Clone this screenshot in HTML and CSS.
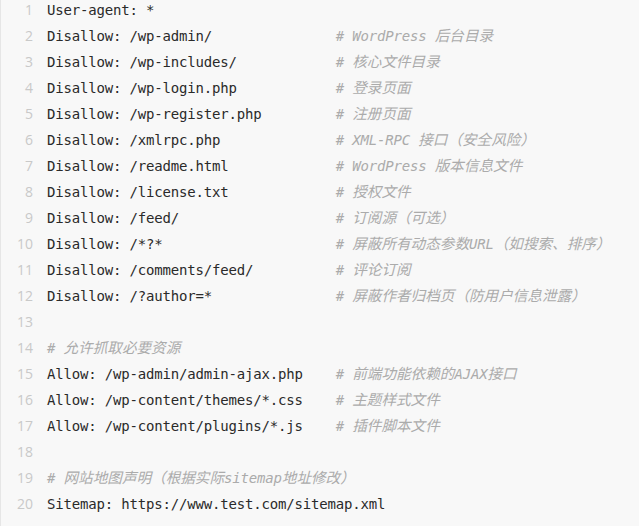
FILE: index.html
```html
<!DOCTYPE html>
<html lang="zh-CN">
<head>
<meta charset="utf-8">
<title>robots.txt</title>
<link rel="stylesheet" href="styles.css">
</head>
<body>
<div class="code">
  <ol class="nums">
    <li>1</li><li>2</li><li>3</li><li>4</li><li>5</li><li>6</li><li>7</li><li>8</li><li>9</li><li>10</li>
    <li>11</li><li>12</li><li>13</li><li>14</li><li>15</li><li>16</li><li>17</li><li>18</li><li>19</li><li>20</li>
  </ol>
<pre class="src">User-agent: *
Disallow: /wp-admin/               <span class="c"># WordPress <span class="z">后台目录</span></span>
Disallow: /wp-includes/            <span class="c"># <span class="z">核心文件目录</span></span>
Disallow: /wp-login.php            <span class="c"># <span class="z">登录页面</span></span>
Disallow: /wp-register.php         <span class="c"># <span class="z">注册页面</span></span>
Disallow: /xmlrpc.php              <span class="c"># XML-RPC <span class="z">接口（安全风险）</span></span>
Disallow: /readme.html             <span class="c"># WordPress <span class="z">版本信息文件</span></span>
Disallow: /license.txt             <span class="c"># <span class="z">授权文件</span></span>
Disallow: /feed/                   <span class="c"># <span class="z">订阅源（可选）</span></span>
Disallow: /*?*                     <span class="c"># <span class="z">屏蔽所有动态参数</span>URL<span class="z">（如搜索、排序）</span></span>
Disallow: /comments/feed/          <span class="c"># <span class="z">评论订阅</span></span>
Disallow: /?author=*               <span class="c"># <span class="z">屏蔽作者归档页（防用户信息泄露）</span></span>

<span class="c"># <span class="z">允许抓取必要资源</span></span>
Allow: /wp-admin/admin-ajax.php    <span class="c"># <span class="z">前端功能依赖的</span>AJAX<span class="z">接口</span></span>
Allow: /wp-content/themes/*.css    <span class="c"># <span class="z">主题样式文件</span></span>
Allow: /wp-content/plugins/*.js    <span class="c"># <span class="z">插件脚本文件</span></span>

<span class="c"># <span class="z">网站地图声明（根据实际</span>sitemap<span class="z">地址修改）</span></span>
Sitemap: https://www.test.com/sitemap.xml</pre>
</div>
</body>
</html>
```

FILE: styles.css
```css
html, body {
  margin: 0;
  padding: 0;
  background: #f8f8f8;
}

.code {
  display: flex;
  background: #f8f8f8;
  border-left: 1px solid #e6e6e6;
  height: 529px;
  box-sizing: border-box;
  margin-top: -3px;
  overflow: hidden;
}

.nums {
  list-style: none;
  margin: 0;
  padding: 0;
  width: 32px;
  flex: none;
  text-align: right;
  font-family: "Open Sans", "Noto Sans", sans-serif;
  font-size: 14px;
  line-height: 26px;
  color: #c9c9c9;
}

.src {
  margin: 0 0 0 14px;
  padding: 0;
  font-family: "DejaVu Sans Mono", "Noto Sans CJK SC", monospace;
  font-size: 14px;
  letter-spacing: -0.18px;
  line-height: 26px;
  color: #2a2a2a;
  white-space: pre;
}

.c {
  color: #ababab;
  font-style: italic;
}

.z {
  font-family: "Noto Sans CJK SC", sans-serif;
  font-size: 14.6px;
  line-height: 1;
  letter-spacing: 0;
}
```
